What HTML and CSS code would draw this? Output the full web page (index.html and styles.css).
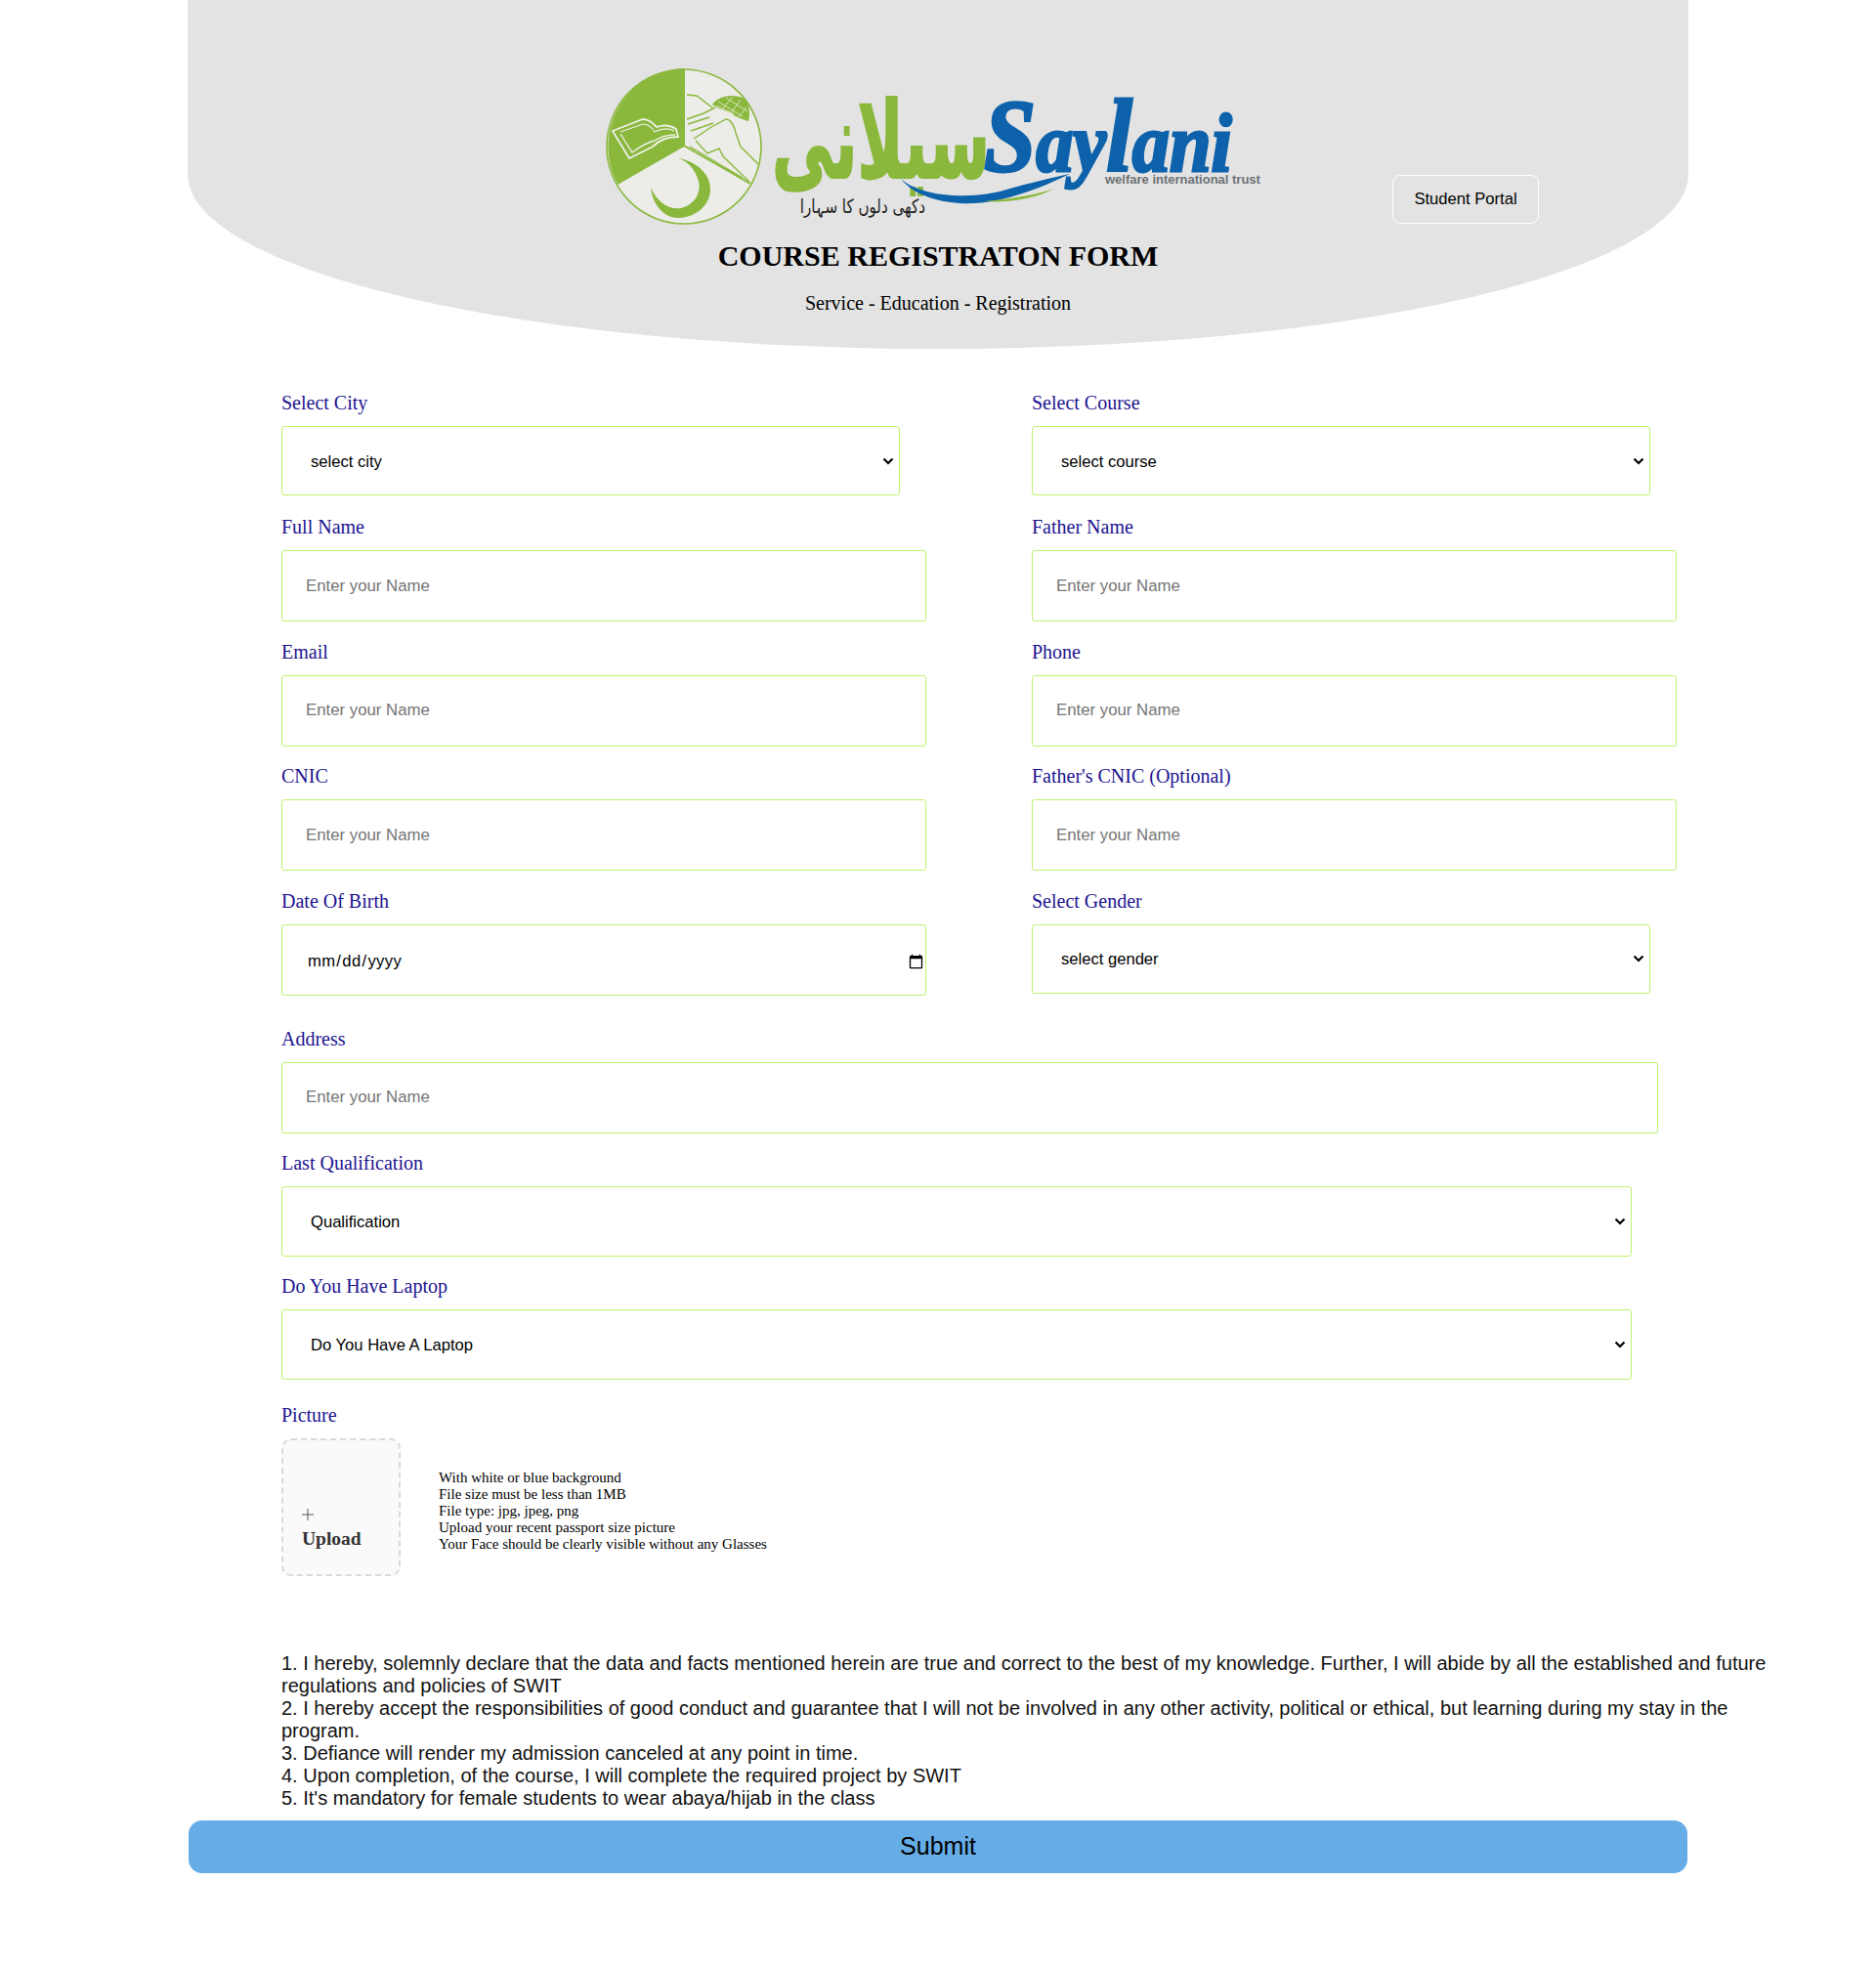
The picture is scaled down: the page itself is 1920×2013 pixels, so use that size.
FILE: index.html
```html
<!DOCTYPE html>
<html lang="en">
<head>
<meta charset="utf-8">
<title>Course Registration Form</title>
<link rel="stylesheet" href="styles.css">
</head>
<body>
<div class="page">
<header class="hero">
  <div class="hero-center">
    <svg class="logo" viewBox="0 0 700 180" width="700" height="180" aria-label="Saylani welfare international trust">
      <circle cx="100" cy="90" r="79" fill="#ecece9" stroke="#8ab83c" stroke-width="1.6"/>
      <path d="M100 10 A80 80 0 0 0 32 128 L100 89 Z" fill="#8ab83c"/>
      <path d="M100 89 L168 128 M100 10 V89 M32 128 L100 89" stroke="#8ab83c" stroke-width="2" fill="none"/>
      <path d="M27 74 L58 62 C64 62 68 66 72 70 C78 68 86 68 92 72 L94 80 C82 80 74 84 68 90 L44 102 Z" fill="none" stroke="#eef0e6" stroke-width="1.8"/>
      <path d="M35 77 L47 96 C55 90 62 86 70 84 C76 80 84 78 91 78" fill="none" stroke="#eef0e6" stroke-width="1.4"/>
      <path d="M35 75 L58 67 C63 67 67 70 70 75 C76 72 84 71 90 74" fill="none" stroke="#eef0e6" stroke-width="1.2"/>
      <path d="M95 102 C115 106 128 120 127 135 C126 152 110 163 94 163 C80 163 68 150 66 132 C72 146 84 155 97 153 C110 150 118 138 115 126 C112 114 105 106 95 102 Z" fill="#8ab83c"/>
      <path d="M103 37 L113 38 L129 50 M103 62 L120 56 L132 50 M104 67 L126 60 M107 74 L130 66 M110 82 L128 70 L143 62 C148 62 152 70 153 76 L158 90 L176 108 M112 84 L124 97 L136 92 L140 100 L167 126 M106 90 L160 122" fill="none" stroke="#8ab83c" stroke-width="1.4"/>
      <path d="M129 47 C136 37 152 36 162 41 C167 47 168 56 166 64 C160 62 153 60 147 55 C141 53 135 51 129 47 Z" fill="#8ab83c"/>
      <path d="M135 44 L160 59 M143 40 L165 54 M133 48 L152 57 M150 39 L139 52 M158 42 L148 56 M164 50 L156 60" stroke="#dfe8c8" stroke-width="0.9" fill="none"/>
      <text class="logo-urdu-main" transform="translate(190,122) scale(0.63,1.09)" direction="rtl" text-anchor="end">سیلانی</text>
      <path d="M322 123 C340 140 390 146 430 134 C455 127 475 122 495 118 C470 130 450 138 425 144 C385 154 340 146 322 123 Z" fill="#0d62ab"/>
      <path d="M407 146 C430 144 460 140 478 133 C462 143 430 148 407 146 Z" fill="#8ab83c"/>
      <text class="logo-saylani" transform="translate(407,115) scale(0.91,1)"><tspan class="logo-s">S</tspan>ay<tspan class="logo-l">l</tspan>ani</text>
      <text class="logo-trust" x="531" y="128">welfare international trust</text>
      <text class="logo-urdu-tag" transform="translate(347,158) scale(0.84,1.1)" direction="rtl" text-anchor="start">دکھی دلوں کا سہارا</text>
    </svg>
    <h1 class="hero-title">COURSE REGISTRATON FORM</h1>
    <p class="hero-sub">Service - Education - Registration</p>
  </div>
  <button class="portal-btn" type="button">Student Portal</button>
</header>

<form class="form">
  <div class="row row-a">
    <div class="field"><label class="label">Select City</label>
      <select class="control select sel-half"><option>select city</option></select></div>
    <div class="field"><label class="label">Select Course</label>
      <select class="control select sel-half"><option>select course</option></select></div>
  </div>
  <div class="row row-b">
    <div class="field"><label class="label">Full Name</label>
      <input class="control inp-half" type="text" placeholder="Enter your Name"></div>
    <div class="field"><label class="label">Father Name</label>
      <input class="control inp-half" type="text" placeholder="Enter your Name"></div>
  </div>
  <div class="row row-b">
    <div class="field"><label class="label">Email</label>
      <input class="control inp-half" type="text" placeholder="Enter your Name"></div>
    <div class="field"><label class="label">Phone</label>
      <input class="control inp-half" type="text" placeholder="Enter your Name"></div>
  </div>
  <div class="row row-b">
    <div class="field"><label class="label">CNIC</label>
      <input class="control inp-half" type="text" placeholder="Enter your Name"></div>
    <div class="field"><label class="label">Father's CNIC (Optional)</label>
      <input class="control inp-half" type="text" placeholder="Enter your Name"></div>
  </div>
  <div class="row row-dob">
    <div class="field"><label class="label">Date Of Birth</label>
      <input class="control inp-half date" type="date"></div>
    <div class="field"><label class="label">Select Gender</label>
      <select class="control select sel-half"><option>select gender</option></select></div>
  </div>
  <div class="field field-full gap-address"><label class="label">Address</label>
    <input class="control inp-full" type="text" placeholder="Enter your Name"></div>
  <div class="field field-full gap-qual"><label class="label">Last Qualification</label>
    <select class="control select sel-full"><option>Qualification</option></select></div>
  <div class="field field-full gap-laptop"><label class="label">Do You Have Laptop</label>
    <select class="control select sel-full"><option>Do You Have A Laptop</option></select></div>
  <div class="field field-full gap-picture"><label class="label">Picture</label>
    <div class="picture-row">
      <div class="upload">
        <svg class="plus" viewBox="0 0 12 12" width="12" height="12"><path d="M6 0V12M0 6H12" stroke="#555" stroke-width="1" fill="none"/></svg>
        <span class="upload-text">Upload</span>
      </div>
      <p class="notes">With white or blue background<br>File size must be less than 1MB<br>File type: jpg, jpeg, png<br>Upload your recent passport size picture<br>Your Face should be clearly visible without any Glasses</p>
    </div>
  </div>
  <p class="terms">1. I hereby, solemnly declare that the data and facts mentioned herein are true and correct to the best of my knowledge. Further, I will abide by all the established and future regulations and policies of SWIT<br>2. I hereby accept the responsibilities of good conduct and guarantee that I will not be involved in any other activity, political or ethical, but learning during my stay in the program.<br>3. Defiance will render my admission canceled at any point in time.<br>4. Upon completion, of the course, I will complete the required project by SWIT<br>5. It's mandatory for female students to wear abaya/hijab in the class</p>
</form>
<button class="submit" type="button">Submit</button>
</div>
</body>
</html>
```
FILE: styles.css
```css
* { box-sizing: border-box; }
html, body { margin: 0; padding: 0; background: #fff; }
body { font-family: "Liberation Serif", serif; color: #000; }
.page { width: 1920px; height: 2013px; overflow: hidden; }

.hero {
  width: 1536px;
  height: 357px;
  margin: 0 auto;
  background: #e3e3e3;
  border-radius: 0 0 50% 50%;
  display: grid;
  grid-template-columns: 418px 700px 418px;
}
.hero-center { grid-column: 2; padding-top: 60px; display: flex; flex-direction: column; align-items: center; }
.logo { display: block; width: 700px; height: 180px; overflow: visible; margin-left: -20px; }
.hero-title { margin: 5px 0 0; font-size: 30px; line-height: 34px; font-weight: 700; color: #000; white-space: nowrap; }
.hero-sub { margin: 20px 0 0; font-size: 20px; line-height: 23px; white-space: nowrap; }
.portal-btn {
  grid-column: 3;
  justify-self: start;
  align-self: start;
  margin: 179px 0 0 115px;
  width: 150px;
  height: 50px;
  background: transparent;
  border: 1px solid #fff;
  border-radius: 8px;
  font: 16.6px "Liberation Sans", sans-serif;
  color: #000;
}

.logo-urdu-main { font: 700 100px "DejaVu Sans", sans-serif; fill: #8ab83c; stroke: #8ab83c; stroke-width: 2px; }
.logo-saylani { font: italic 700 84px "Liberation Serif", serif; fill: #0d62ab; stroke: #0d62ab; stroke-width: 3px; }
.logo-s { font-size: 105px; }
.logo-l { font-size: 105px; }
.logo-trust { font: 700 13px "Liberation Sans", sans-serif; fill: #6b7175; }
.logo-urdu-tag { font: 18px "DejaVu Sans", sans-serif; fill: #222; }

.form { width: 1536px; margin-left: 288px; padding-top: 44px; }
.row { display: grid; grid-template-columns: 768px 768px; }
.row-a { height: 127px; }
.row-b { height: 127.5px; }
.row-dob { height: 110px; }
.field { display: flex; flex-direction: column; align-items: flex-start; }
.label { font-size: 20px; line-height: 23px; color: #1d1490; margin-bottom: 12px; }
.control {
  border: 1px solid #bff36f;
  border-radius: 3px;
  background-color: #fff;
  font: 16.6px "Liberation Sans", sans-serif;
  color: #000;
  padding: 0 24px;
  outline: 0;
}
.control::placeholder { color: #757575; font-size: 16.8px; }
.select {
  appearance: none;
  -webkit-appearance: none;
  padding-left: 29px;
  padding-top: 1px;
  background-image: url("data:image/svg+xml,%3Csvg xmlns='http://www.w3.org/2000/svg' width='12' height='8' viewBox='0 0 12 8'%3E%3Cpath d='M1.5 1.5 L6 6 L10.5 1.5' fill='none' stroke='%23000' stroke-width='2.2'/%3E%3C/svg%3E");
  background-repeat: no-repeat;
  background-position: right 5px center;
}
.sel-half { width: 633px; height: 71px; }
.inp-half { width: 660px; height: 73px; }
.inp-full { width: 1409px; height: 73px; }
.sel-full { width: 1382px; height: 72px; }
.date { padding: 4px 0 0 25px; }
.date::-webkit-datetime-edit { letter-spacing: 0.35px; }
.date::-webkit-calendar-picker-indicator { margin: 0 -1px 0 0; }
.gap-address { margin-top: 31px; }
.gap-qual { margin-top: 19px; }
.gap-laptop { margin-top: 19px; }
.gap-picture { margin-top: 25px; }
.picture-row { display: flex; align-items: center; }
.upload {
  width: 122px;
  height: 141px;
  background: #fafafa;
  border: 2px dashed #d9d9d9;
  border-radius: 10px;
  padding: 70px 0 0 19px;
  display: flex;
  flex-direction: column;
  align-items: flex-start;
  gap: 8px;
}
.upload-text { font-size: 19.5px; line-height: 22px; font-weight: 700; color: #333; }
.notes { margin: 8px 0 0 39px; font-size: 15px; line-height: 17px; }
.terms { margin: 78px 0 0; font: 20px/23px "Liberation Sans", sans-serif; color: #111; }
.submit {
  display: block;
  width: 1534px;
  height: 54px;
  margin: 11px 0 0 193px;
  background: #66ade8;
  border: 0;
  border-radius: 14px;
  font: 25px "Liberation Sans", sans-serif;
  color: #000;
}
```
